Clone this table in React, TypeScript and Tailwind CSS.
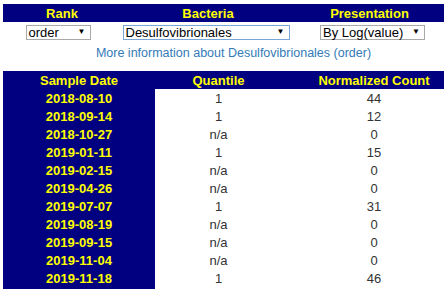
import React from "react";

const rows = [
  { date: "2018-08-10", q: "1", c: "44" },
  { date: "2018-09-14", q: "1", c: "12" },
  { date: "2018-10-27", q: "n/a", c: "0" },
  { date: "2019-01-11", q: "1", c: "15" },
  { date: "2019-02-15", q: "n/a", c: "0" },
  { date: "2019-04-26", q: "n/a", c: "0" },
  { date: "2019-07-07", q: "1", c: "31" },
  { date: "2019-08-19", q: "n/a", c: "0" },
  { date: "2019-09-15", q: "n/a", c: "0" },
  { date: "2019-11-04", q: "n/a", c: "0" },
  { date: "2019-11-18", q: "1", c: "46" },
];

const Select = ({ label, width, focused }: { label: string; width: string; focused?: boolean }) => {
  return (
    <div
      className={`flex items-center justify-between h-[15px] bg-white border ${
        focused ? "border-[#7aa7d8]" : "border-[#a9a9a9]"
      } pl-[2px] pr-[4px] ${width}`}
    >
      <span className="text-[13px] leading-none text-black">{label}</span>
      <span className="text-[8px] leading-none text-black">▼</span>
    </div>
  );
};

const App = () => {
  return (
    <div className="w-[447px] h-[292px] bg-white pt-[4px] px-[3px] font-['Liberation_Sans',Arial,sans-serif]">
      {/* controls */}
      <div className="w-[441px]">
        <div className="grid grid-cols-[118px_174px_149px] h-[18px] bg-[#000080] text-[#ffff00] font-bold text-[13px] items-center text-center">
          <div>Rank</div>
          <div>Bacteria</div>
          <div>Presentation</div>
        </div>
        <div className="grid grid-cols-[118px_174px_149px] h-[16px] mt-[2px] items-center">
          <div className="flex justify-center pr-[8px]">
            <Select label="order" width="w-[65px]" />
          </div>
          <div className="flex justify-center pr-[4px]">
            <Select label="Desulfovibrionales" width="w-[167px]" focused />
          </div>
          <div className="flex justify-center pl-[6px]">
            <Select label="By Log(value)" width="w-[105px]" />
          </div>
        </div>
        <div className="text-center text-[12.5px] text-[#337ab7] mt-[6px] leading-[14px] pl-[20px]">
          More information about Desulfovibrionales (order)
        </div>
      </div>

      {/* data table */}
      <div className="w-[441px] mt-[11px]">
        <div className="grid grid-cols-[152px_127px_162px] h-[18px] bg-[#000080] text-[#ffff00] font-bold text-[13px] items-center text-center">
          <div>Sample Date</div>
          <div>Quantile</div>
          <div className="pl-[22px]">Normalized Count</div>
        </div>
        {rows.map((r) => (
          <div key={r.date} className="grid grid-cols-[152px_127px_162px] h-[18px] items-center text-center text-[13px]">
            <div className="h-full flex items-center justify-center bg-[#000080] text-[#ffff00] font-bold">{r.date}</div>
            <div className="text-[#333]">{r.q}</div>
            <div className="pl-[22px] text-[#333]">{r.c}</div>
          </div>
        ))}
      </div>
    </div>
  );
};

export default App;
